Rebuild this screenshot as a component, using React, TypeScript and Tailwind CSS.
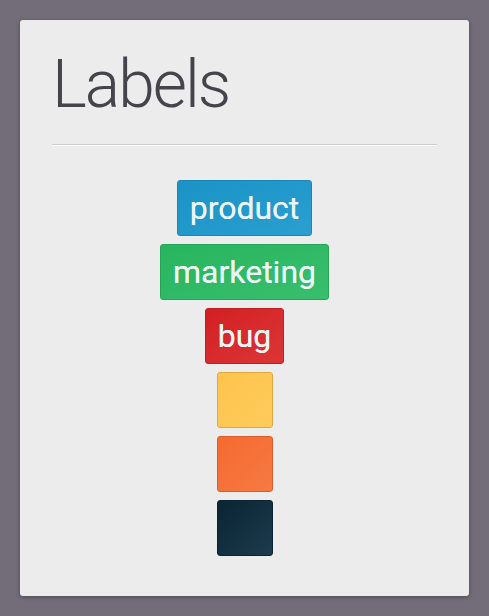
const labels = [
  { name: "product", cls: "border-[#1b86b6] bg-gradient-to-br from-[#1a93c6] to-[#2a9fd0]" },
  { name: "marketing", cls: "border-[#25a455] bg-gradient-to-br from-[#28b45e] to-[#38bf6e]" },
  { name: "bug", cls: "border-[#be1f22] bg-gradient-to-br from-[#d21f24] to-[#dc3536]" },
  { name: "", cls: "border-[#dfa73c] bg-gradient-to-br from-[#fec44c] to-[#fecb5c]" },
  { name: "", cls: "border-[#d95d2c] bg-gradient-to-br from-[#f56a30] to-[#f57a42]" },
  { name: "", cls: "border-[#0b2230] bg-gradient-to-br from-[#0a2534] to-[#1c3b4c]" },
];

export default function App() {
  return (
    <div className="min-h-[616px] bg-[#736d79] p-5" style={{ fontFamily: "Roboto, 'Open Sans', sans-serif" }}>
      <div className="h-[576px] rounded-[3px] bg-[#ececec] px-8 pt-[25px] shadow-[0_1px_4px_rgba(0,0,0,0.35)]">
        <h1 className="text-[66px] font-light leading-[80px] tracking-[-2px] text-[#45434b]">Labels</h1>
        <div className="mt-[19px] h-[2px] border-t border-[#cdcdcd] bg-white" />
        <div className="mt-[34px] flex flex-col items-center gap-2">
          {labels.map((l, i) => (
            <div
              key={i}
              className={`flex h-14 min-w-14 items-center justify-center rounded-[3px] border px-3 text-[32px] text-[#eaf5f4] [text-shadow:0_0_0.5px_rgba(255,255,255,0.8)] ${l.cls}`}
            >
              {l.name}
            </div>
          ))}
        </div>
      </div>
    </div>
  );
}
